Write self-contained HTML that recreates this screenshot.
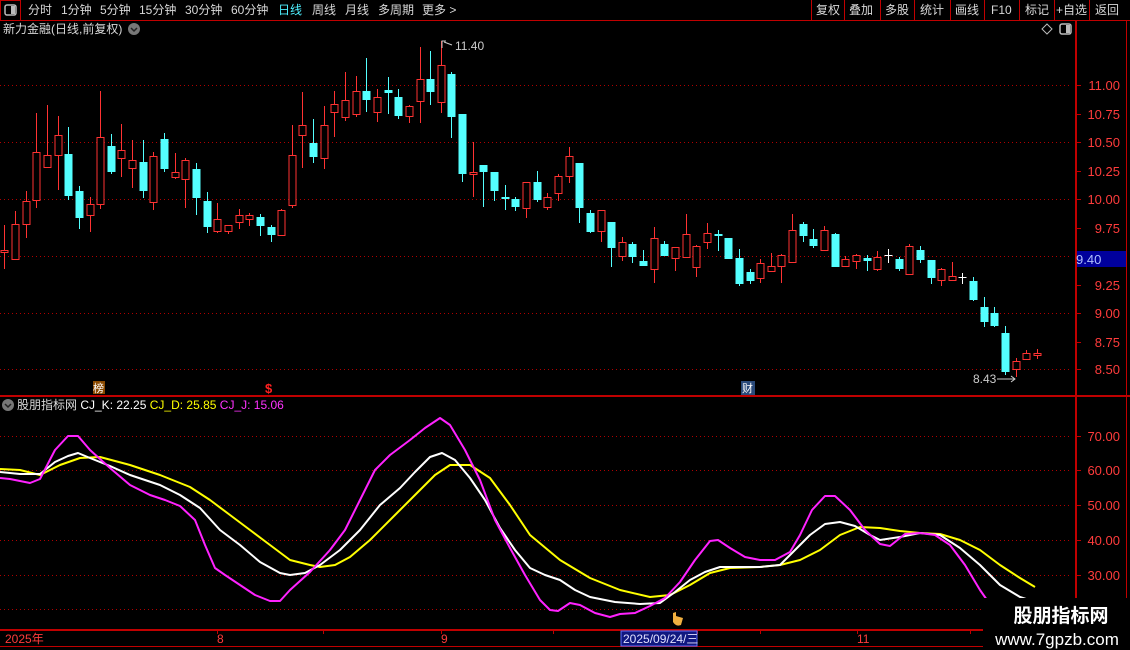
<!DOCTYPE html>
<html><head><meta charset="utf-8">
<style>
html,body{margin:0;padding:0;background:#000;width:1130px;height:650px;overflow:hidden}
body{font-family:"Liberation Sans","Noto Sans CJK SC",sans-serif;position:relative}
.t{position:absolute;font-size:12px;color:#d8d8d8;white-space:nowrap;line-height:14px}
</style></head><body>
<svg id="s" width="1130" height="650" style="position:absolute;left:0;top:0" xmlns="http://www.w3.org/2000/svg" font-family="Liberation Sans, Noto Sans CJK SC, sans-serif">
</svg>
<div class="t" style="left:28px;top:3px">分时</div>
<div class="t" style="left:61px;top:3px">1分钟</div>
<div class="t" style="left:100px;top:3px">5分钟</div>
<div class="t" style="left:139px;top:3px">15分钟</div>
<div class="t" style="left:185px;top:3px">30分钟</div>
<div class="t" style="left:231px;top:3px">60分钟</div>
<div class="t" style="left:278px;top:3px;color:#4ef0ff">日线</div>
<div class="t" style="left:312px;top:3px">周线</div>
<div class="t" style="left:345px;top:3px">月线</div>
<div class="t" style="left:378px;top:3px">多周期</div>
<div class="t" style="left:422px;top:3px">更多 &gt;</div>
<div class="t" style="left:816px;top:3px">复权</div>
<div class="t" style="left:849px;top:3px">叠加</div>
<div class="t" style="left:885px;top:3px">多股</div>
<div class="t" style="left:920px;top:3px">统计</div>
<div class="t" style="left:955px;top:3px">画线</div>
<div class="t" style="left:991px;top:3px">F10</div>
<div class="t" style="left:1025px;top:3px">标记</div>
<div class="t" style="left:1056px;top:3px">+自选</div>
<div class="t" style="left:1095px;top:3px">返回</div>
<div class="t" style="left:3px;top:22px">新力金融(日线,前复权)</div>
<div class="t" style="left:17px;top:398px">股朋指标网 <span style="color:#fff">CJ_K: 22.25</span> <span style="color:#ffff00">CJ_D: 25.85</span> <span style="color:#ff33ff">CJ_J: 15.06</span></div>
<script>
var s=document.getElementById('s');var h='';
function L(x1,y1,x2,y2,c,w,d){h+='<line x1="'+x1+'" y1="'+y1+'" x2="'+x2+'" y2="'+y2+'" stroke="'+c+'" stroke-width="'+(w||1)+'"'+(d?' stroke-dasharray="'+d+'"':'')+'/>';}
function T(x,y,t,c,sz,a,extra){h+='<text x="'+x+'" y="'+y+'" fill="'+c+'" font-size="'+(sz||12)+'"'+(a?' text-anchor="'+a+'"':'')+(extra||'')+'>'+t+'</text>';}
// top bar
L(0,20.5,1130,20.5,'#c00000',1);
h+='<rect x="0.5" y="0.5" width="20" height="20" fill="none" stroke="#c00000"/>';
h+='<rect x="5" y="5" width="11" height="10" rx="2" fill="none" stroke="#bbb" stroke-width="1.5"/><rect x="11" y="6" width="4" height="8" fill="#bbb"/>';
[811,844,880,914,950,984,1019,1054,1089].forEach(function(x){L(x+.5,0,x+.5,20,'#c00000');});
// header icons
h+='<circle cx="134" cy="29" r="6" fill="#777"/><path d="M131 28 L134 31 L137 28" fill="none" stroke="#222" stroke-width="1.5"/>';
h+='<path d="M1047 24 L1052 29 L1047 34 L1042 29Z" fill="none" stroke="#bbb"/>';
h+='<rect x="1060" y="24" width="11" height="10" rx="2" fill="none" stroke="#bbb" stroke-width="1.5"/><rect x="1066" y="25" width="4" height="8" fill="#bbb"/>';
// axis lines
L(1076,20,1076,650,'#c00000',2);
L(1126.5,20,1126.5,650,'#c00000',1);
L(0,396,1130,396,'#c00000',2);
// price grid
var P=[[11.00,85],[10.75,114],[10.50,142],[10.25,171],[10.00,199],[9.75,228],[9.50,256],[9.25,285],[9.00,313],[8.75,342],[8.50,369]];
P.forEach(function(p,i){ if(i%2==0) L(0,p[1]+.5,1072,p[1]+.5,'#b00000',1,'1 3'); L(1077,p[1]+.5,1081,p[1]+.5,'#c00000'); if(p[0]!=9.5) T(1120,p[1]+5,p[0].toFixed(2),'#ff3c3c',13,'end');});
h+='<rect x="1077" y="251" width="49" height="16" fill="#00009c"/>';T(1076,264,'9.40','#b0c0ff',13);
// candles
var C=[
[250,252,225,269,'r'],[224,259,211,259,'r'],[201,224,191,238,'r'],[152,200,113,208,'r'],[155,167,105,167,'r'],[135,155,116,190,'r'],[154,196,127,200,'c'],[191,218,186,229,'c'],[204,215,197,232,'r'],[137,204,91,209,'r'],
[146,172,134,174,'c'],[150,158,124,177,'r'],[160,168,140,188,'r'],[162,191,140,198,'c'],[156,202,152,210,'r'],[139,169,133,172,'c'],[172,177,153,179,'r'],[160,179,158,208,'r'],[169,198,163,215,'c'],[201,227,192,233,'c'],
[219,231,203,233,'r'],[225,231,225,234,'r'],[215,222,209,229,'r'],[215,219,213,226,'r'],[217,226,214,236,'c'],[227,235,225,242,'c'],[210,235,209,235,'r'],[155,205,125,208,'r'],[125,135,92,168,'r'],[143,157,119,163,'c'],
[125,158,106,169,'r'],[104,112,91,137,'r'],[100,117,72,121,'r'],[91,114,76,117,'r'],[91,100,58,112,'c'],[97,112,89,122,'r'],[90,93,77,114,'c'],[97,116,89,119,'c'],[106,116,105,123,'r'],[79,101,47,123,'r'],
[79,92,51,105,'c'],[65,102,41,113,'r'],[74,117,72,138,'c'],[114,174,114,182,'c'],[172,174,142,197,'r'],[165,172,165,207,'c'],[172,191,172,201,'c'],[197,198,185,210,'c'],[199,207,197,211,'c'],[182,208,182,218,'r'],
[182,200,171,202,'c'],[197,207,193,210,'r'],[176,193,174,201,'r'],[156,176,147,183,'r'],[163,208,163,223,'c'],[213,232,210,233,'c'],[210,231,210,242,'r'],[222,248,222,267,'c'],[242,256,237,261,'r'],[244,257,242,263,'c'],
[261,266,250,266,'c'],[238,269,227,283,'r'],[244,256,241,256,'c'],[247,258,247,271,'r'],[234,257,214,258,'r'],[246,267,245,277,'r'],[233,242,223,249,'r'],[234,236,230,251,'c'],[238,259,238,259,'c'],[258,284,249,286,'c'],
[272,281,269,284,'c'],[263,278,259,283,'r'],[266,271,253,271,'r'],[255,266,254,283,'r'],[230,262,214,263,'r'],[224,236,222,242,'c'],[239,246,229,248,'c'],[230,250,226,250,'r'],[234,267,233,267,'c'],[259,266,256,267,'r'],
[255,261,254,269,'r'],[258,261,255,271,'c'],[257,269,251,271,'r'],[255,255,249,263,'w'],[259,269,257,271,'c'],[246,274,244,274,'r'],[250,260,246,263,'c'],[260,278,260,284,'c'],[269,280,268,286,'r'],[276,280,262,280,'r'],
[277,277,273,284,'w'],[281,300,277,301,'c'],[307,322,297,327,'c'],[313,326,307,327,'c'],[333,372,326,375,'c'],[361,369,358,377,'r'],[353,359,350,359,'r'],[353,355,349,359,'r']];
C.forEach(function(c,i){var x=Math.round(4.4+i*10.645)+.5;
 if(c[4]=='c'){L(x,c[2],x,c[3],'#54ffff');var hh=Math.max(c[1]-c[0],2);h+='<rect x="'+(x-4)+'" y="'+c[0]+'" width="8" height="'+hh+'" fill="#54ffff"/>';}
 else if(c[4]=='w'){L(x,c[2],x,c[3],'#fff');L(x-4,c[0]+.5,x+4,c[0]+.5,'#fff');}
 else{L(x,c[2],x,c[0],'#ff3232');L(x,c[1],x,c[3],'#ff3232');var hh=Math.max(c[1]-c[0],2);h+='<rect x="'+(x-3.5)+'" y="'+(c[0]+.5)+'" width="7" height="'+hh+'" fill="#000" stroke="#ff3232"/>';}
});
// annotations
h+='<path d="M442 48 L442 41 L446 41 M444 42 L452 45" fill="none" stroke="#ccc"/>';T(455,50,'11.40','#ccc',12);
T(973,383,'8.43','#ccc',12);h+='<path d="M997 379 L1015 379 M1011 376 L1015 379 L1011 382" fill="none" stroke="#ccc"/>';
h+='<rect x="93" y="381" width="12" height="13" fill="#8a4a00"/>';T(93,392,'榜','#fff',11);
T(265,393,'$','#ff2020',13,'',' font-weight="bold"');
h+='<rect x="741" y="381" width="14" height="14" fill="#2a4a7a"/>';T(742,392,'财','#fff',11);
h+='<circle cx="8" cy="405" r="6" fill="#777"/><path d="M5 404 L8 407 L11 404" fill="none" stroke="#222" stroke-width="1.5"/>';
// indicator grid
[[70,436],[60,470],[50,505],[40,540],[30,575]].forEach(function(g){L(0,g[1]+.5,1072,g[1]+.5,'#b00000',1,'1 3');L(1077,g[1]+.5,1081,g[1]+.5,'#c00000');T(1120,g[1]+5,g[0].toFixed(2),'#ff3c3c',13,'end');});
L(0,609.5,1072,609.5,'#b00000',1,'1 3');
function PL(pts,c,w){h+='<polyline points="'+pts+'" fill="none" stroke="'+c+'" stroke-width="'+w+'" stroke-linejoin="round"/>';}
PL('0,469 20,470 40,475 60,465 80,458 100,457 130,465 160,475 190,487 210,500 230,515 250,530 270,545 290,560 310,565 320,567 335,565 350,557 370,540 395,515 415,495 435,475 450,465 470,465 490,478 510,505 530,535 560,560 590,578 620,590 650,597 670,595 690,585 710,573 730,568 760,567 780,565 800,560 820,550 840,535 860,527 880,528 900,531 920,533 940,534 960,540 980,550 1000,565 1020,578 1035,587','#ffff00',2);
PL('0,472 20,474 40,474 55,462 68,456 78,453 90,458 110,466 130,475 160,485 180,495 200,508 220,530 240,545 260,562 280,573 290,575 305,573 320,565 340,550 360,530 380,505 400,488 415,472 430,457 442,453 455,460 470,478 485,500 500,528 515,550 530,568 545,575 560,580 575,590 590,597 615,602 640,604 660,603 675,592 690,580 705,572 720,567 760,567 780,565 795,550 810,535 825,524 840,522 855,526 870,535 880,540 900,537 920,533 940,535 960,548 980,565 1000,585 1020,597 1035,602','#ffffff',2);
PL('0,478 10,479 30,483 40,479 55,450 68,436 78,436 90,450 110,468 130,485 150,495 165,500 180,506 195,520 205,545 215,568 225,575 240,585 255,595 270,601 280,601 290,590 310,572 330,550 345,530 360,500 375,470 390,455 410,440 425,428 440,418 450,425 465,450 480,480 495,520 510,548 525,575 540,600 550,610 558,611 570,603 580,605 595,613 610,617 620,614 635,613 650,606 665,598 680,582 695,560 710,541 718,540 730,548 745,557 760,560 775,560 790,552 800,535 812,510 825,496 835,496 850,510 865,530 880,544 890,546 905,534 920,533 935,535 950,545 965,565 980,590 987,600','#ff22ff',2);
// cursor hand
h+='<path d="M673 613 L673 622 Q676 627 681 625 L683 618 L676 616 L676 612 Z" fill="#f0b040"/>';
// bottom axis
L(0,630,1076,630,'#c00000',2);L(0,646.5,1076,646.5,'#c00000',1);
[217,323,441,553,621,697,760,857,970].forEach(function(x){L(x+.5,630,x+.5,634,'#c00000');});
T(5,643,'2025年','#ff3c3c',12);T(217,643,'8','#ff3c3c',12);T(441,643,'9','#ff3c3c',12);T(857,643,'11','#ff3c3c',12);
h+='<rect x="621" y="631" width="76" height="15" fill="#101880" stroke="#6070ff"/>';T(623,643,'2025/09/24/三','#e0e0ff',12);
// watermark
h+='<rect x="983" y="598" width="147" height="52" fill="#000"/>';
T(1061,622,'股朋指标网','#fff',19,'middle',' font-weight="bold"');
T(1057,645,'www.7gpzb.com','#fff',17,'middle');
s.innerHTML=h;
</script>
</body></html>
